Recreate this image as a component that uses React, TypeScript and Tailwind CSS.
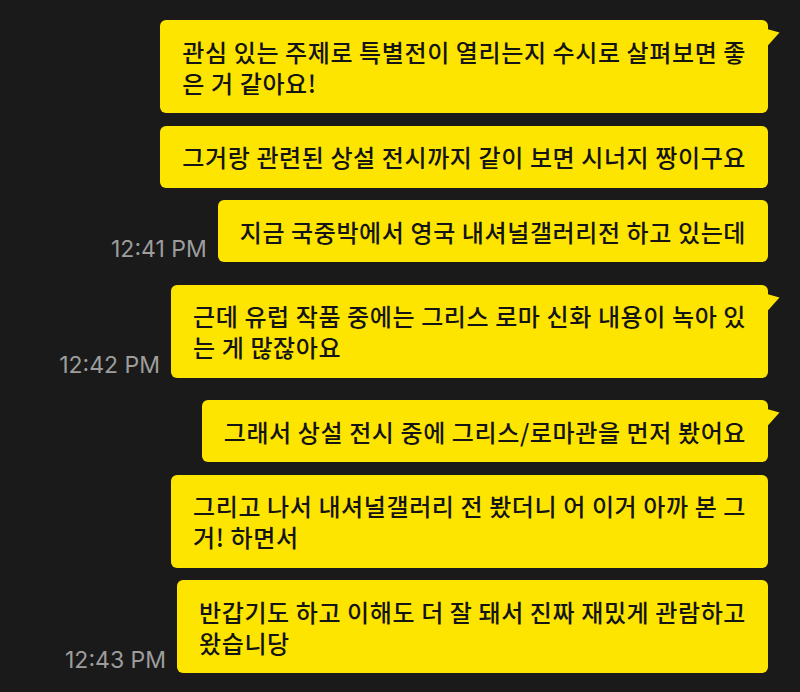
import React from 'react';

type Msg = {
  lines: string[];
  tail?: boolean;
  time?: string;
};

type Group = Msg[];

const groups: Group[] = [
  [
    {
      lines: ['관심 있는 주제로 특별전이 열리는지 수시로 살펴보면 좋', '은 거 같아요!'],
      tail: true,
    },
    { lines: ['그거랑 관련된 상설 전시까지 같이 보면 시너지 짱이구요'] },
    { lines: ['지금 국중박에서 영국 내셔널갤러리전 하고 있는데'], time: '12:41 PM' },
  ],
  [
    {
      lines: ['근데 유럽 작품 중에는 그리스 로마 신화 내용이 녹아 있', '는 게 많잖아요'],
      tail: true,
      time: '12:42 PM',
    },
  ],
  [
    { lines: ['그래서 상설 전시 중에 그리스/로마관을 먼저 봤어요'], tail: true },
    { lines: ['그리고 나서 내셔널갤러리 전 봤더니 어 이거 아까 본 그', '거! 하면서'] },
    {
      lines: ['반갑기도 하고 이해도 더 잘 돼서 진짜 재밌게 관람하고', '왔습니당'],
      time: '12:43 PM',
    },
  ],
];

function Tail() {
  return (
    <svg
      className="absolute top-[9px] right-[-12px]"
      width="13"
      height="18"
      viewBox="0 0 13 18"
    >
      <polygon points="0,0 12.5,3.5 0,17.5" fill="#FEE500" />
    </svg>
  );
}

function Bubble({ msg }: { msg: Msg }) {
  return (
    <div className="flex items-end justify-end gap-[11px]">
      {msg.time && (
        <span className="mb-[1px] font-['Inter','Liberation_Sans',sans-serif] text-[23px] leading-none text-[#9d9d9d]">
          {msg.time}
        </span>
      )}
      <div className="relative rounded-[6px] bg-[#FEE500] px-[22px] py-[15.5px]">
        {msg.tail && <Tail />}
        <p className="font-['Noto_Sans_CJK_KR','Noto_Sans',sans-serif] text-[24px] font-medium leading-[31px] tracking-[0.6px] whitespace-nowrap text-[#141414]">
          {msg.lines.map((l, i) => (
            <React.Fragment key={i}>
              {i > 0 && <br />}
              {l}
            </React.Fragment>
          ))}
        </p>
      </div>
    </div>
  );
}

export default function App() {
  return (
    <div className="h-[692px] w-[800px] overflow-hidden bg-[#1a1a1a] pt-[20px] pr-[32px]">
      <div className="flex flex-col gap-[22.5px]">
        {groups.map((g, gi) => (
          <div key={gi} className="flex flex-col gap-[12.5px]">
            {g.map((m, mi) => (
              <Bubble key={mi} msg={m} />
            ))}
          </div>
        ))}
      </div>
    </div>
  );
}
